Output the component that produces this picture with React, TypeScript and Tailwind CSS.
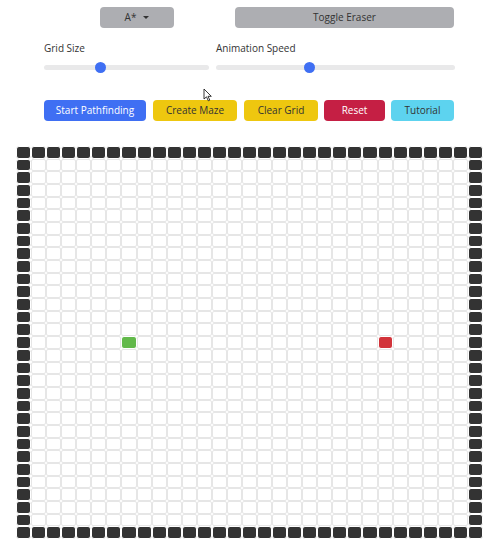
import React from 'react';

const SIZE = 31;
const START = { r: 15, c: 7 };
const END = { r: 15, c: 24 };

const Slider = ({ width, pos }: { width: number; pos: number }) => (
  <div className="relative h-[20px]" style={{ width }}>
    <div className="absolute left-0 right-0 top-[8px] h-[5px] rounded-full bg-[#e9e9ea]" />
    <div
      className="absolute top-[5px] w-[11px] h-[11px] rounded-full bg-[#3f6ff3]"
      style={{ left: pos - 5 }}
    />
  </div>
);

const Cell = ({ r, c }: { r: number; c: number }) => {
  const wall = r === 0 || c === 0 || r === SIZE - 1 || c === SIZE - 1;
  const start = r === START.r && c === START.c;
  const end = r === END.r && c === END.c;
  if (wall) return <div className="rounded-[3px] border-[0.5px] border-white bg-[#333333]" />;
  if (start) return <div className="rounded-[3px] border border-white bg-[#62b94a]" />;
  if (end) return <div className="rounded-[3px] border border-white bg-[#d2333a]" />;
  return <div className="rounded-[2px] border border-[#e6e6e6] bg-white" />;
};

export default function App() {
  const cells = [];
  for (let r = 0; r < SIZE; r++) {
    for (let c = 0; c < SIZE; c++) {
      cells.push(<Cell key={`${r}-${c}`} r={r} c={c} />);
    }
  }

  return (
    <div className="relative w-[500px] h-[552px] bg-white font-['Open_Sans','Noto_Sans',sans-serif] text-[#333]">
      <div className="pl-[44px] pt-[7px]">
        {/* Top controls */}
        <div className="flex items-center">
          <button className="ml-[56px] flex h-[21px] w-[74px] items-center justify-center gap-[7px] rounded-[4px] bg-[#adaeb2] text-[10px] text-[#333]">
            A*
            <span className="h-0 w-0 border-x-[3px] border-t-[3px] border-x-transparent border-t-[#333]" />
          </button>
          <button className="ml-[61px] h-[21px] w-[219px] rounded-[4px] bg-[#adaeb2] text-[10px] text-[#333]">
            Toggle Eraser
          </button>
        </div>

        {/* Sliders */}
        <div className="mt-[11px] flex gap-[7px]">
          <div>
            <div className="h-[18px] text-[10px] leading-[18px] text-[#333]">Grid Size</div>
            <Slider width={165} pos={56} />
          </div>
          <div>
            <div className="h-[18px] text-[10px] leading-[18px] text-[#333]">Animation Speed</div>
            <Slider width={239} pos={93} />
          </div>
        </div>

        {/* Action buttons */}
        <div className="mt-[23px] flex gap-[6px] text-[10px]">
          <button className="h-[21px] w-[102px] rounded-[4px] bg-[#3f6ff3] text-white">Start Pathfinding</button>
          <button className="ml-px h-[21px] w-[84px] rounded-[4px] bg-[#eec70f] text-[#333]">Create Maze</button>
          <button className="ml-px h-[21px] w-[74px] rounded-[4px] bg-[#eec70f] text-[#333]">Clear Grid</button>
          <button className="h-[21px] w-[61px] rounded-[4px] bg-[#c51f44] text-white">Reset</button>
          <button className="h-[21px] w-[63px] rounded-[4px] bg-[#5dd3ef] text-[#333]">Tutorial</button>
        </div>
      </div>

      {/* Grid */}
      <div className="ml-[16px] mt-[25px] grid h-[393px] w-[467px] grid-cols-[repeat(31,1fr)] grid-rows-[repeat(31,1fr)]">
        {cells}
      </div>

      {/* Mouse cursor */}
      <svg className="absolute left-[203px] top-[88px]" width="10" height="14" viewBox="0 0 10 14">
        <path d="M1 1 L1 11 L3.5 8.8 L5.3 12.8 L6.8 12.1 L5 8.3 L8.3 8.3 Z" fill="white" stroke="#222" strokeWidth="0.9" strokeLinejoin="round" />
      </svg>
    </div>
  );
}
